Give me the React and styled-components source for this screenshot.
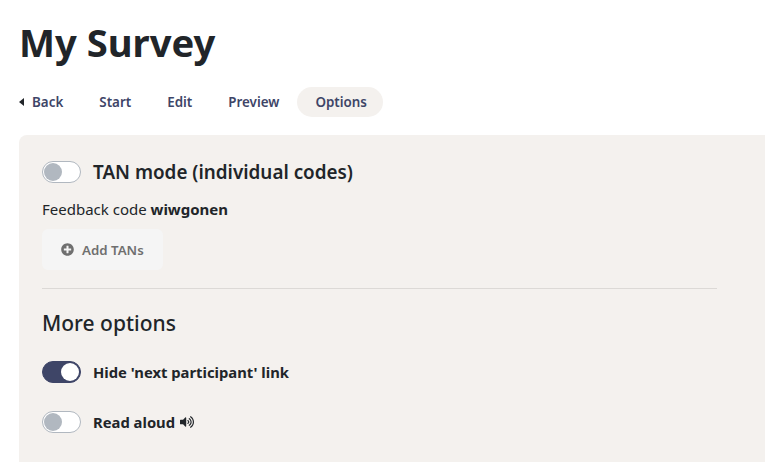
import styled, { createGlobalStyle } from "styled-components";
import { FaPlusCircle, FaVolumeUp } from "react-icons/fa";

const GlobalStyle = createGlobalStyle`
  html, body {
    margin: 0;
    padding: 0;
    background: #fff;
    overflow: hidden;
  }
  body {
    font-family: "Noto Sans", "Liberation Sans", sans-serif;
    color: #212529;
  }
`;

const Page = styled.div`
  width: 765px;
  height: 462px;
  padding: 13px 0 0 19px;
  box-sizing: border-box;
  overflow: hidden;
`;

const Title = styled.h1`
  margin: 0 0 16px 0;
  font-size: 38.2px;
  line-height: 58px;
  font-weight: 700;
  color: #212529;
`;

const Nav = styled.nav`
  display: flex;
  align-items: center;
  height: 30px;
  margin-bottom: 18px;
`;

const NavItem = styled.a`
  display: flex;
  align-items: center;
  height: 30px;
  padding: ${(p) => (p.$back ? "0 18px 0 0" : p.$active ? "0 16px 0 18px" : "0 18px")};
  border-radius: 15px;
  font-size: 13.4px;
  font-weight: 600;
  color: #3e4567;
  background: ${(p) => (p.$active ? "#f4f1ee" : "transparent")};
`;

const BackIcon = styled.svg`
  width: 5px;
  height: 8px;
  margin-right: 8px;
  fill: #212529;
`;

const Panel = styled.section`
  background: #f4f1ee;
  border-radius: 8px 0 0 0;
  padding: 25px 48px 0 23px;
  height: 340px;
`;

const Row = styled.div`
  display: flex;
  align-items: center;
  gap: 12px;
  height: 24px;
`;

const Track = styled.span`
  position: relative;
  display: block;
  width: 39px;
  height: 22px;
  box-sizing: border-box;
  border-radius: 11px;
  border: 1px solid ${(p) => (p.$on ? "#3e4567" : "#b1b8c0")};
  background: ${(p) => (p.$on ? "#3e4567" : "#fff")};
`;

const Knob = styled.span`
  position: absolute;
  top: 1px;
  left: ${(p) => (p.$on ? "18px" : "1px")};
  width: 18px;
  height: 18px;
  border-radius: 50%;
  background: ${(p) => (p.$on ? "#fff" : "#b1b8c0")};
`;

const ModeLabel = styled.span`
  padding-bottom: 1px;
  font-size: 18.85px;
  font-weight: 600;
  color: #212529;
`;

const Code = styled.p`
  margin: 15px 0 0;
  font-size: 15px;
  line-height: 20px;
  color: #212529;
  b {
    font-weight: 700;
  }
`;

const AddButton = styled.button`
  display: flex;
  align-items: center;
  gap: 8px;
  width: 121px;
  height: 41px;
  margin-top: 10px;
  padding: 0 0 0 19px;
  border: 0;
  border-radius: 6px;
  background: #f5f5f5;
  color: #6f6f6f;
  font-family: inherit;
  font-size: 13.3px;
  font-weight: 600;
`;

const Divider = styled.hr`
  margin: 18px 0 0;
  border: 0;
  border-top: 1px solid #dcd9d6;
`;

const Heading = styled.h2`
  margin: 19px 0 22px;
  font-size: 21px;
  line-height: 30px;
  font-weight: 500;
  color: #212529;
`;

const OptionList = styled.div`
  display: flex;
  flex-direction: column;
  gap: 26px;
`;

const OptionLabel = styled.span`
  display: flex;
  align-items: center;
  gap: 5px;
  font-size: 14.8px;
  font-weight: 700;
  color: #212529;
`;

const Toggle = ({ on }) => (
  <Track $on={on}>
    <Knob $on={on} />
  </Track>
);

export default function App() {
  return (
    <Page>
      <GlobalStyle />
      <Title>My Survey</Title>
      <Nav>
        <NavItem $back>
          <BackIcon viewBox="0 0 5 8">
            <polygon points="5,0 5,8 0,4" />
          </BackIcon>
          Back
        </NavItem>
        <NavItem>Start</NavItem>
        <NavItem>Edit</NavItem>
        <NavItem>Preview</NavItem>
        <NavItem $active>Options</NavItem>
      </Nav>
      <Panel>
        <Row>
          <Toggle />
          <ModeLabel>TAN mode (individual codes)</ModeLabel>
        </Row>
        <Code>
          Feedback code <b>wiwgonen</b>
        </Code>
        <AddButton>
          <FaPlusCircle size={13} />
          Add TANs
        </AddButton>
        <Divider />
        <Heading>More options</Heading>
        <OptionList>
          <Row>
            <Toggle on />
            <OptionLabel>Hide 'next participant' link</OptionLabel>
          </Row>
          <Row>
            <Toggle />
            <OptionLabel>
              Read aloud <FaVolumeUp size={14} />
            </OptionLabel>
          </Row>
        </OptionList>
      </Panel>
    </Page>
  );
}
